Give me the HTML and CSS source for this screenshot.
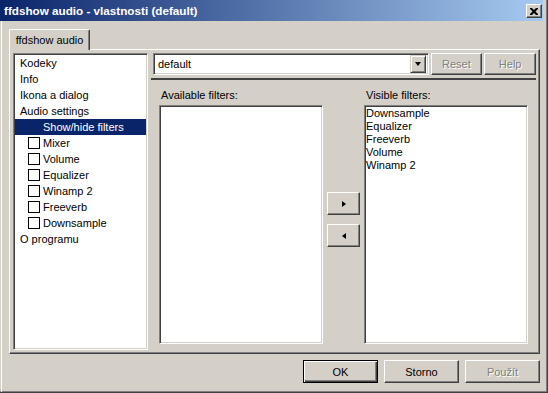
FILE: index.html
```html
<!DOCTYPE html>
<html lang="cs">
<head>
    <meta charset="UTF-8">
    <title>ffdshow audio - vlastnosti (default)</title>
    <link rel="stylesheet" href="styles.css">
</head>
<body>
    <div class="window">
        <div class="titlebar">
            <span class="title">ffdshow audio - vlastnosti (default)</span>
            <span class="close-btn">
                <svg width="8" height="7" viewBox="0 0 8 7">
                    <path d="M0 0h2l2 2 2-2h2v1l-2.5 2.5L8 6v1H6L4 5 2 7H0V6l2.5-2.5L0 1z" fill="#000"/>
                </svg>
            </span>
        </div>

        <div class="client">
            <div class="tabs">
                <div class="tab">ffdshow audio</div>
            </div>

            <div class="tab-panel">
                <ul class="tree">
                    <li>Kodeky</li>
                    <li>Info</li>
                    <li>Ikona a dialog</li>
                    <li>Audio settings</li>
                    <li class="sub selected">Show/hide filters</li>
                    <li class="check"><span class="box"></span>Mixer</li>
                    <li class="check"><span class="box"></span>Volume</li>
                    <li class="check"><span class="box"></span>Equalizer</li>
                    <li class="check"><span class="box"></span>Winamp 2</li>
                    <li class="check"><span class="box"></span>Freeverb</li>
                    <li class="check"><span class="box"></span>Downsample</li>
                    <li>O programu</li>
                </ul>

                <div class="page">
                    <div class="toolbar">
                        <div class="combo">
                            <span class="combo-text">default</span>
                            <span class="combo-btn"><span class="arrow-down"></span></span>
                        </div>
                        <button class="btn small disabled">Reset</button>
                        <button class="btn small disabled">Help</button>
                    </div>

                    <div class="filters">
                        <div class="filter-col">
                            <div class="label">Available filters:</div>
                            <div class="listbox"></div>
                        </div>
                        <div class="move-btns">
                            <button class="btn move"><span class="arrow-right"></span></button>
                            <button class="btn move"><span class="arrow-left"></span></button>
                        </div>
                        <div class="filter-col">
                            <div class="label">Visible filters:</div>
                            <div class="listbox">
                                <div class="item">Downsample</div>
                                <div class="item">Equalizer</div>
                                <div class="item">Freeverb</div>
                                <div class="item">Volume</div>
                                <div class="item">Winamp 2</div>
                            </div>
                        </div>
                    </div>
                </div>
            </div>

            <div class="dialog-btns">
                <button class="btn wide default">OK</button>
                <button class="btn wide">Storno</button>
                <button class="btn wide disabled">Použít</button>
            </div>
        </div>
    </div>
</body>
</html>
```

FILE: styles.css
```css
body {
    margin: 0;
    font-family: "Liberation Sans", Arial, sans-serif;
    font-size: 11px;
    color: #000;
    background: #d4d0c8;
}
.window {
    width: 548px;
    height: 393px;
    box-sizing: border-box;
    background: #d4d0c8;
    border-right: 1px solid #404040;
    border-bottom: 1px solid #404040;
    box-shadow: inset -1px -1px #808080;
    overflow: hidden;
}
.titlebar {
    width: 543px;
    height: 21px;
    display: flex;
    align-items: center;
    justify-content: space-between;
    background: linear-gradient(to right, #0a246a, #a6caf0);
}
.title {
    color: #fff;
    font-weight: bold;
    font-size: 11.7px;
    padding-left: 4px;
}
.close-btn {
    width: 14px;
    height: 12px;
    margin-right: 1px;
    margin-top: 1px;
    display: flex;
    align-items: center;
    justify-content: center;
    background: #d4d0c8;
    border: 1px solid;
    border-color: #fff #404040 #404040 #fff;
    box-shadow: inset -1px -1px #808080;
}
.client {
    margin-left: 1px;
    border-left: 1px solid #fff;
    height: 371px;
}
.tabs {
    padding-top: 8px;
    padding-left: 7px;
    display: flex;
}
.tab {
    position: relative;
    z-index: 1;
    width: 79px;
    height: 20px;
    margin-bottom: -1px;
    line-height: 20px;
    text-align: center;
    background: #d4d0c8;
    border: 1px solid;
    border-bottom: none;
    border-color: #fff #404040 #fff #fff;
    border-radius: 2px 2px 0 0;
    box-shadow: inset -1px 0 #808080;
}
.tab-panel {
    margin-left: 7px;
    width: 531px;
    height: 305px;
    box-sizing: border-box;
    border: 1px solid;
    border-color: #fff #404040 #404040 #fff;
    box-shadow: inset -1px -1px #808080;
    padding: 3px;
    display: flex;
}
.tree {
    list-style: none;
    margin: 0;
    padding: 0;
    width: 135px;
    height: 297px;
    box-sizing: border-box;
    background: #fff;
    border: 1px solid;
    border-color: #808080 #fff #fff #808080;
    box-shadow: inset 1px 1px #404040, inset -1px -1px #d4d0c8;
    padding: 1px 1px;
}
.tree li {
    height: 16px;
    line-height: 16px;
    padding-left: 5px;
    display: flex;
    align-items: center;
    white-space: nowrap;
}
.tree li.sub {
    padding-left: 28px;
}
.tree li.selected {
    background: #0a246a;
    color: #fff;
}
.tree li.check {
    padding-left: 13px;
}
.box {
    width: 10px;
    height: 10px;
    border: 1px solid #000;
    margin-right: 3px;
    flex: none;
}
.page {
    margin-left: 3px;
    width: 385px;
}
.toolbar {
    display: flex;
    gap: 2px;
    padding-left: 2px;
    height: 22px;
    margin-bottom: 3px;
}
.combo {
    width: 277px;
    height: 22px;
    box-sizing: border-box;
    background: #fff;
    border: 1px solid;
    border-color: #808080 #fff #fff #808080;
    box-shadow: inset 1px 1px #404040, inset -1px -1px #d4d0c8;
    padding: 2px;
    display: flex;
    align-items: center;
    justify-content: space-between;
}
.combo-text {
    padding-left: 2px;
}
.combo-btn {
    width: 14px;
    height: 16px;
    background: #d4d0c8;
    border: 1px solid;
    border-color: #d4d0c8 #404040 #404040 #d4d0c8;
    box-shadow: inset 1px 1px #fff, inset -1px -1px #808080;
    display: flex;
    align-items: center;
    justify-content: center;
}
.arrow-down {
    width: 0;
    height: 0;
    border-left: 3.5px solid transparent;
    border-right: 3.5px solid transparent;
    border-top: 4px solid #000;
}
.btn {
    font-family: "Liberation Sans", Arial, sans-serif;
    font-size: 11px;
    color: #000;
    background: #d4d0c8;
    border: 1px solid;
    border-color: #fff #404040 #404040 #fff;
    box-shadow: inset -1px -1px #808080;
    padding: 0;
    margin: 0;
    display: flex;
    align-items: center;
    justify-content: center;
    box-sizing: border-box;
}
.btn.small {
    width: 52px;
    height: 22px;
}
.btn.disabled {
    color: #808080;
    text-shadow: 1px 1px #fff;
}
.filters {
    border-top: 2px solid #404040;
    padding-top: 9px;
    padding-left: 8px;
    display: flex;
    align-items: flex-start;
    gap: 4px;
}
.filter-col {
    width: 164px;
}
.label {
    height: 13px;
    line-height: 13px;
    padding-left: 2px;
    margin-bottom: 3px;
}
.listbox {
    height: 239px;
    box-sizing: border-box;
    background: #fff;
    border: 1px solid;
    border-color: #808080 #fff #fff #808080;
    box-shadow: inset 1px 1px #404040, inset -1px -1px #d4d0c8;
    padding: 1px 1px;
}
.item {
    height: 13px;
    line-height: 13px;
}
.move-btns {
    margin-top: 103px;
    display: flex;
    flex-direction: column;
    gap: 9px;
}
.btn.move {
    width: 33px;
    height: 23px;
}
.arrow-right {
    width: 0;
    height: 0;
    border-top: 3.5px solid transparent;
    border-bottom: 3.5px solid transparent;
    border-left: 4px solid #000;
}
.arrow-left {
    width: 0;
    height: 0;
    border-top: 3.5px solid transparent;
    border-bottom: 3.5px solid transparent;
    border-right: 4px solid #000;
}
.dialog-btns {
    margin-top: 6px;
    margin-right: 7px;
    display: flex;
    justify-content: flex-end;
    gap: 6px;
}
.btn.wide {
    width: 75px;
    height: 23px;
}
.btn.default {
    border: 1px solid #000;
    box-shadow: inset 1px 1px #fff, inset -1px -1px #404040, inset -2px -2px #808080;
}
```
